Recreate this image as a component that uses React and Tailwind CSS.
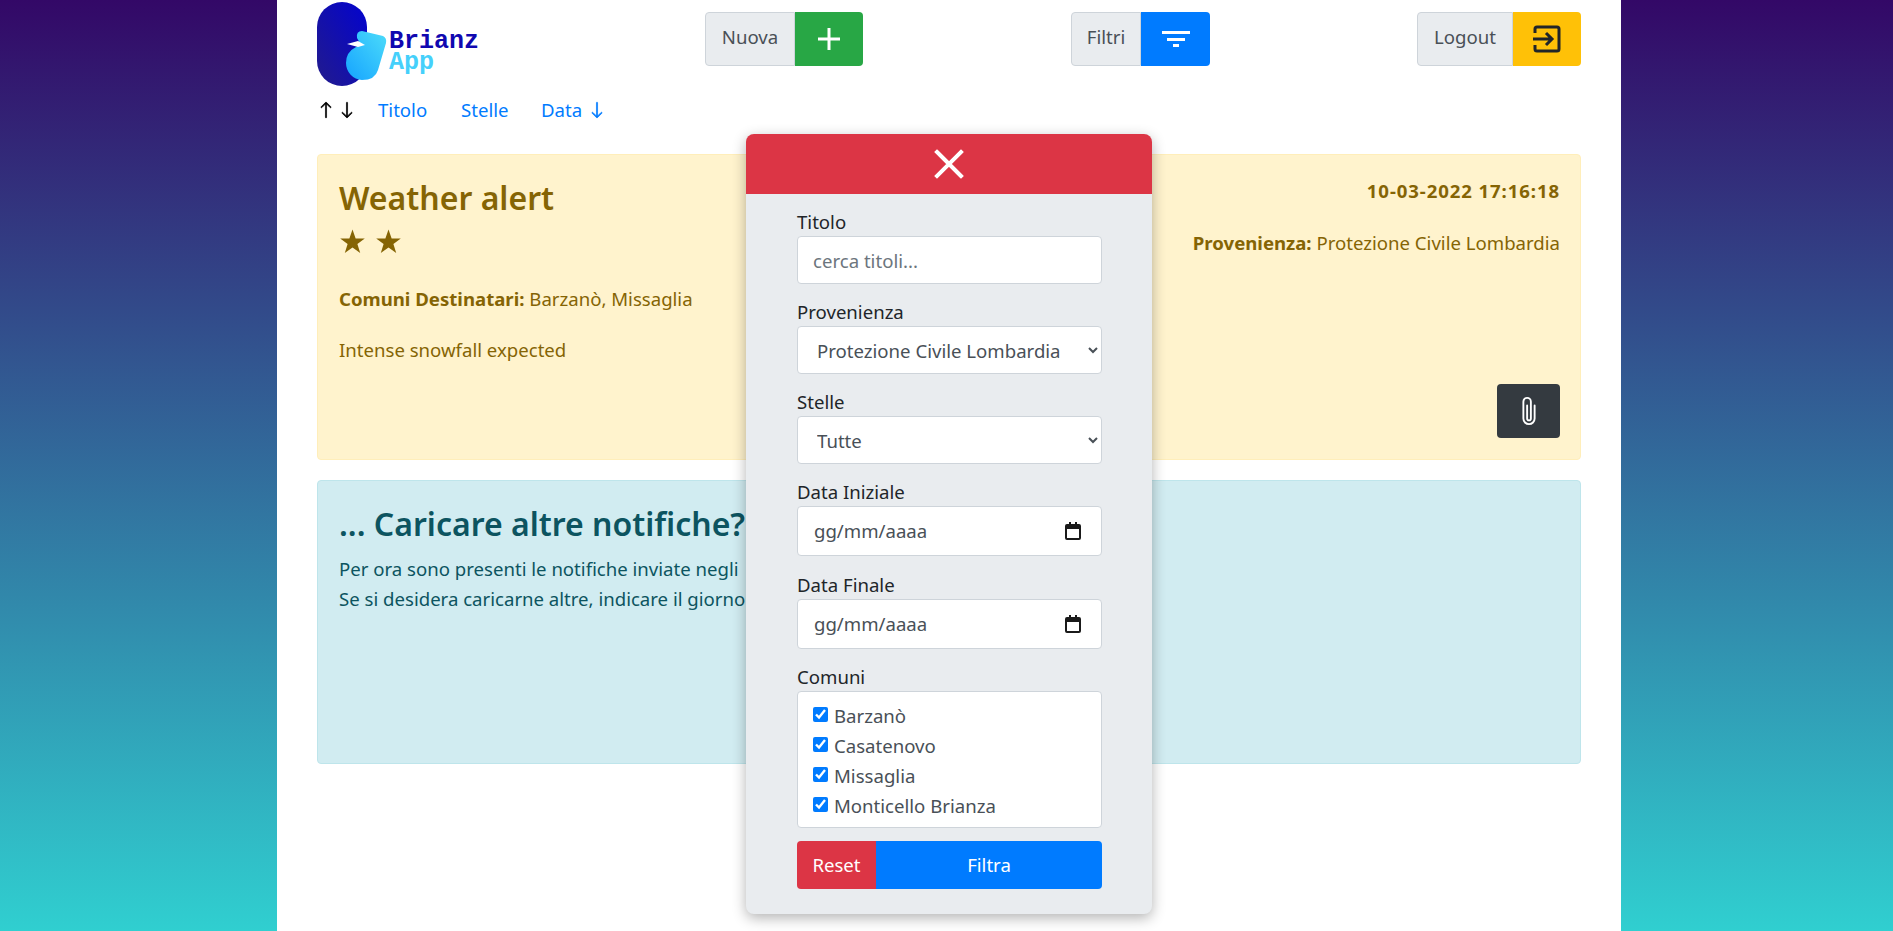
import { BsArrowUp, BsArrowDown } from 'react-icons/bs'

const font = { fontFamily: '"Noto Sans", sans-serif' }

function Logo() {
  return (
    <div className="flex w-[388px] items-start">
      <svg width="70" height="90" viewBox="7 0 70 90">
        <defs>
          <linearGradient id="pill" x1="1" y1="0" x2="0" y2="1">
            <stop offset="0" stopColor="#0303cf" />
            <stop offset="1" stopColor="#221b8c" />
          </linearGradient>
          <linearGradient id="blob" x1="1" y1="0" x2="0" y2="1">
            <stop offset="0" stopColor="#4cdcfa" />
            <stop offset="1" stopColor="#15a3ff" />
          </linearGradient>
        </defs>
        <rect x="7" y="2" width="50" height="84" rx="25" fill="url(#pill)" />
        <path d="M52 31 L73 36 Q77 38 76 43 L68 70 Q65 80 52 80 A17 17 0 0 1 36 63 Q36 52 46 47 Q52 45 47 38 Q46 31 52 31 Z" fill="url(#blob)" />
        <path d="M37 44 L48 41 L55 45 L48 47 Z" fill="#fff" />
      </svg>
      <div className="ml-[2px] pt-[31px] font-['Liberation_Mono'] text-[25px] font-bold leading-[21px]">
        <div className="text-[#1008b0]">Brianz</div>
        <div className="text-[#45d0fb]">App</div>
      </div>
    </div>
  )
}

function Star() {
  return (
    <svg width="25" height="25" viewBox="0 0 24 24" fill="#856404">
      <path d="M12 .5 15 9h8.8l-7.1 5.3 2.700 8.700L12 17.800 4.600 23l2.700-8.700L.2 9H9z" />
    </svg>
  )
}

function HeaderButton({ label, textW, btnW, color, children }) {
  return (
    <div className="mt-3 flex h-[54px]">
      <span className="flex items-center justify-center rounded-l border border-[#ced4da] bg-[#e9ecef] pb-[4px] text-[#495057]" style={{ width: textW }}>
        {label}
      </span>
      <button className={`flex items-center justify-center rounded-r ${color}`} style={{ width: btnW }}>
        {children}
      </button>
    </div>
  )
}

function Field({ label, mb = 'mb-[15px]', children }) {
  return (
    <div className={mb}>
      <label className="block h-[27px] leading-[25px] text-[#212529]">{label}</label>
      {children}
    </div>
  )
}

function DateField({ label, mb }) {
  return (
    <Field label={label} mb={mb}>
      <div className="flex h-[50px] items-center justify-between rounded border border-[#ced4da] bg-white pl-[16px] pr-[19px] text-[#495057]">
        <span>gg/mm/aaaa</span>
        <svg width="18" height="18" viewBox="0 0 18 18" fill="#1a1a1a">
          <path d="M3 2h2V0h2v2h4V0h2v2h2a2 2 0 0 1 2 2v12a2 2 0 0 1-2 2H3a2 2 0 0 1-2-2V4a2 2 0 0 1 2-2zm0 5v9h12V7H3z" />
        </svg>
      </div>
    </Field>
  )
}

function Comune({ name }) {
  return (
    <label className="flex h-[30px] items-center text-[#495057]">
      <input type="checkbox" defaultChecked className="mb-[3px] mr-[6px] h-[15px] w-[15px] accent-[#007bff]" />
      {name}
    </label>
  )
}

function FilterModal() {
  return (
    <div className="absolute left-[746px] top-[134px] w-[406px] overflow-hidden rounded-lg bg-[#e9ecef] shadow-[0_4px_14px_rgba(0,0,0,0.3)]">
      <div className="flex h-[60px] items-center justify-center bg-[#dc3545]">
        <svg width="30" height="30" viewBox="0 0 30 30" stroke="#fff" strokeWidth="4" strokeLinecap="square">
          <path d="M3 3 27 27M27 3 3 27" />
        </svg>
      </div>
      <div className="ml-[51px] mr-[50px] pb-[25px] pt-[15px]">
        <Field label="Titolo">
          <input placeholder="cerca titoli..." className="h-[48px] w-full rounded border border-[#ced4da] bg-white px-[15px] text-[#495057] placeholder:text-[#6c757d]" />
        </Field>
        <Field label="Provenienza">
          <select className="h-[48px] w-full rounded border border-[#ced4da] bg-white pl-[15px] pr-0 text-[#495057]">
            <option>Protezione Civile Lombardia</option>
          </select>
        </Field>
        <Field label="Stelle">
          <select className="h-[48px] w-full rounded border border-[#ced4da] bg-white px-[15px] text-[#495057]">
            <option>Tutte</option>
          </select>
        </Field>
        <DateField label="Data Iniziale" mb="mb-[16px]" />
        <DateField label="Data Finale" mb="mb-[15px]" />
        <div className="mb-[13px]">
          <label className="block h-[27px] leading-[25px] text-[#212529]">Comuni</label>
          <div className="h-[137px] rounded border border-[#ced4da] bg-white px-[15px] py-[9px]">
            <Comune name="Barzanò" />
            <Comune name="Casatenovo" />
            <Comune name="Missaglia" />
            <Comune name="Monticello Brianza" />
          </div>
        </div>
        <div className="flex h-[48px] text-white">
          <button className="w-[79px] rounded-l bg-[#dc3545]">Reset</button>
          <button className="flex-1 rounded-r bg-[#007bff]">Filtra</button>
        </div>
      </div>
    </div>
  )
}

export default function App() {
  return (
    <div className="relative h-[931px] overflow-hidden bg-linear-to-b/srgb from-[#330867] to-[#30cfd0] text-[18.6px]" style={font}>
      <div className="ml-[277px] h-full w-[1344px] bg-white px-10">
        <div className="flex items-start">
          <Logo />
          <HeaderButton label="Nuova" textW={90} btnW={68} color="bg-[#28a745]">
            <svg width="24" height="24" viewBox="0 0 24 24" stroke="#fff" strokeWidth="3">
              <path d="M12 1v22M1 12h22" />
            </svg>
          </HeaderButton>
          <div className="ml-[208px]">
            <HeaderButton label="Filtri" textW={70} btnW={69} color="bg-[#007bff]">
              <svg width="28" height="16" viewBox="0 0 28 16" fill="#fff">
                <rect x="0" y="0" width="28" height="3" />
                <rect x="5" y="7" width="18" height="3" />
                <rect x="11" y="13" width="6" height="3" />
              </svg>
            </HeaderButton>
          </div>
          <div className="ml-auto">
            <HeaderButton label="Logout" textW={96} btnW={68} color="bg-[#ffc107]">
              <svg width="28" height="28" viewBox="0 0 28 28" fill="none" stroke="#212529" strokeWidth="3">
                <path d="M2 8V4a2 2 0 0 1 2-2h20a2 2 0 0 1 2 2v20a2 2 0 0 1-2 2H4a2 2 0 0 1-2-2v-4" />
                <path d="M0 14h19M13 8l6 6-6 6" />
              </svg>
            </HeaderButton>
          </div>
        </div>

        <div className="mt-[5px] flex h-[30px] items-center text-[#007bff]">
          <span className="flex w-[61px] items-center text-black">
            <BsArrowUp size={18} stroke="currentColor" strokeWidth={0.6} />
            <BsArrowDown size={18} stroke="currentColor" strokeWidth={0.6} className="ml-[3px]" />
          </span>
          <a className="w-[83px]">Titolo</a>
          <a className="w-[80px]">Stelle</a>
          <a className="flex items-center gap-[6px]">Data <BsArrowDown size={18} stroke="currentColor" strokeWidth={0.6} /></a>
        </div>

        <div className="mt-[29px] flex h-[306px] justify-between rounded border border-[#ffeeba] bg-[#fff3cd] pb-[21px] pl-[21px] pr-[20px] pt-[22px] text-[#856404]">
          <div>
            <h2 className="mt-[2px] text-[32px] font-semibold leading-[38px]">Weather alert</h2>
            <div className="ml-[1px] mt-[12px] flex gap-[11px]">
              <Star />
              <Star />
            </div>
            <p className="mt-[31px]"><b>Comuni Destinatari:</b> Barzanò, Missaglia</p>
            <p className="mt-[23px]">Intense snowfall expected</p>
          </div>
          <div className="flex flex-col items-end">
            <b className="tracking-[0.9px]">10-03-2022 17:16:18</b>
            <p className="mt-[24px]"><b>Provenienza:</b> Protezione Civile Lombardia</p>
            <button className="mt-auto flex h-[54px] w-[63px] items-center justify-center rounded bg-[#343a40]">
              <svg width="30" height="30" viewBox="0 0 16 16" fill="#fff">
                <path d="M4.5 3a2.5 2.5 0 0 1 5 0v9a1.5 1.5 0 0 1-3 0V5a.5.5 0 0 1 1 0v7a.5.5 0 0 0 1 0V3a1.5 1.500 0 1 0-3 0v9a2.5 2.5 0 0 0 5 0V5a.5.5 0 0 1 1 0v7a3.5 3.5 0 1 1-7 0V3z" />
              </svg>
            </button>
          </div>
        </div>

        <div className="mt-[20px] h-[284px] rounded border border-[#bee5eb] bg-[#d1ecf1] px-[21px] py-[24px] text-[#0c5460]">
          <h3 className="text-[32px] font-semibold leading-[38px]">... Caricare altre notifiche?</h3>
          <p className="mt-[11px] leading-[30px]">Per ora sono presenti le notifiche inviate negli</p>
          <p className="leading-[30px]">Se si desidera caricarne altre, indicare il giorno</p>
        </div>
      </div>
      <FilterModal />
    </div>
  )
}
